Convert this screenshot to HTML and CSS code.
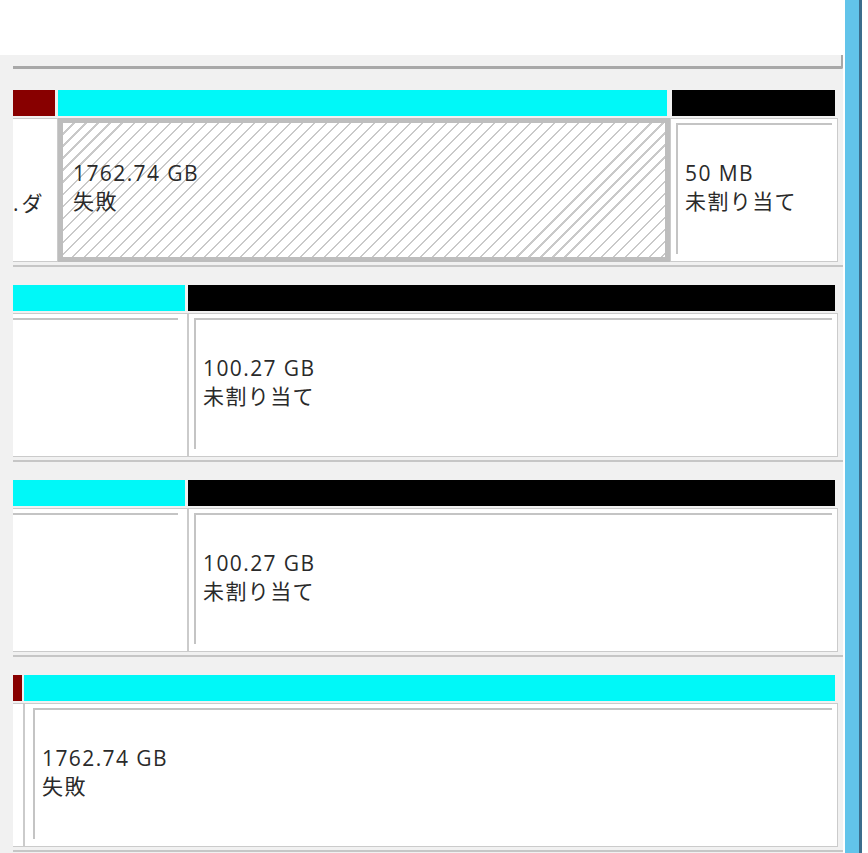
FILE: index.html
```html
<!DOCTYPE html>
<html lang="ja">
<head>
    <meta charset="UTF-8">
    <meta name="viewport" content="width=device-width, initial-scale=1.0">
    <title>ディスクの管理</title>
    <link rel="stylesheet" href="styles.css">
</head>
<body>
    <div class="screen">
        <div class="graph">
            <div class="top-space"></div>
            <div class="list-bottom">
                <div class="list-edge"></div>
            </div>

            <!-- ディスク 1 -->
            <div class="disk">
                <div class="part w-45">
                    <div class="bar red"></div>
                    <div class="body cut">
                        <div class="label tail">&nbsp;<br><span class="dot">.</span>ダ</div>
                    </div>
                </div>
                <div class="part w-612">
                    <div class="bar cyan"></div>
                    <div class="body selected">
                        <div class="label">1762.74 GB<br>失敗</div>
                    </div>
                </div>
                <div class="part w-168">
                    <div class="bar black shift"></div>
                    <div class="body">
                        <div class="frame">
                            <div class="label">50 MB<br>未割り当て</div>
                        </div>
                    </div>
                </div>
            </div>

            <!-- ディスク 2 -->
            <div class="disk">
                <div class="part w-175">
                    <div class="bar cyan"></div>
                    <div class="body cut">
                        <div class="frame cut"></div>
                    </div>
                </div>
                <div class="part w-650">
                    <div class="bar black"></div>
                    <div class="body">
                        <div class="frame">
                            <div class="label">100.27 GB<br>未割り当て</div>
                        </div>
                    </div>
                </div>
            </div>

            <!-- ディスク 3 -->
            <div class="disk">
                <div class="part w-175">
                    <div class="bar cyan"></div>
                    <div class="body cut">
                        <div class="frame cut"></div>
                    </div>
                </div>
                <div class="part w-650">
                    <div class="bar black"></div>
                    <div class="body">
                        <div class="frame">
                            <div class="label">100.27 GB<br>未割り当て</div>
                        </div>
                    </div>
                </div>
            </div>

            <!-- ディスク 4 -->
            <div class="disk">
                <div class="part w-11">
                    <div class="bar red narrow"></div>
                    <div class="body cut"></div>
                </div>
                <div class="part w-814">
                    <div class="bar cyan"></div>
                    <div class="body">
                        <div class="frame wide">
                            <div class="label">1762.74 GB<br>失敗</div>
                        </div>
                    </div>
                </div>
            </div>
        </div>
        <div class="scroll"></div>
    </div>
</body>
</html>
```

FILE: styles.css
```css
* {
    margin: 0;
    padding: 0;
    box-sizing: border-box;
}

body {
    font-family: 'Open Sans', 'Noto Sans CJK JP', sans-serif;
    background: #ffffff;
    color: #2a2a2a;
    overflow: hidden;
}

.screen {
    display: flex;
    height: 853px;
}

.graph {
    width: 843px;
    background: #f1f1f1;
}

.top-space {
    height: 55px;
    background: #ffffff;
}

/* bottom edge of the volume list above */
.list-bottom {
    height: 35px;
    padding-left: 13px;
}

.list-edge {
    height: 14px;
    border-bottom: 3px solid #a8a8a8;
    border-right: 2px solid #a8a8a8;
    border-bottom-right-radius: 2px;
}

.disk {
    display: flex;
    margin-left: 13px;
    padding-right: 5px;
    padding-bottom: 3px;
    margin-bottom: 18px;
    border-bottom: 2px solid #c6c6c6;
}

.part {
    flex-shrink: 0;
    display: flex;
    flex-direction: column;
}

.w-11 { width: 11px; }
.w-45 { width: 45px; }
.w-168 { width: 168px; }
.w-175 { width: 175px; }
.w-612 { width: 612px; }
.w-650 { width: 650px; }
.w-814 { width: 814px; }

.bar {
    height: 26px;
    margin-right: 3px;
}

.bar.shift {
    margin-left: 2px;
}

.bar.narrow {
    margin-right: 2px;
}

.red { background: #880000; }
.cyan { background: #00f8f8; }
.black { background: #000000; }

.body {
    height: 144px;
    margin-top: 2px;
    background: #ffffff;
    border: 1px solid #cbcbcb;
    padding: 4px 5px 7px 5px;
}

.body.cut {
    border-left: none;
    padding-left: 0;
    overflow: hidden;
}

.body.selected {
    border: 5px solid #bdbdbd;
    padding: 0;
    background:
        repeating-linear-gradient(135deg, transparent 0 7px, #c9c9c9 7px 8.5px),
        #ffffff;
}

.frame {
    height: 100%;
    border-top: 2px solid #c4c4c4;
    border-left: 2px solid #c4c4c4;
    padding: 34px 0 0 7px;
}

.frame.cut {
    border-left: none;
    margin-right: 4px;
}

.frame.wide {
    margin-left: 3px;
}

.label {
    font-size: 21px;
    line-height: 28px;
    letter-spacing: 1.4px;
    white-space: nowrap;
}

.selected .label {
    padding: 36px 0 0 10px;
}

/* tail end of a label scrolled off to the left */
.label.tail {
    padding: 38px 0 0 0;
    letter-spacing: 0;
}

.label.tail .dot {
    margin-right: 3px;
}

.scroll {
    width: 17px;
    margin-left: 2px;
    background: #62c4ea;
    border-right: 3px solid #3b6d8c;
}
```
